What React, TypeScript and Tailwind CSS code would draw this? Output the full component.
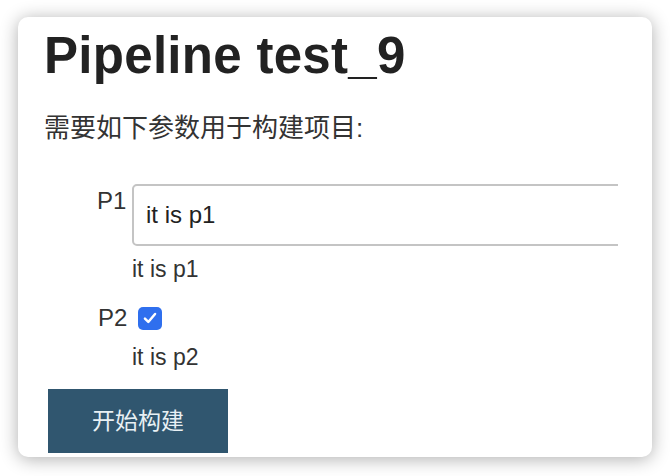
import React from "react";

export default function App() {
  const font = { fontFamily: '"Liberation Sans", Arial, "Noto Sans CJK SC", sans-serif' };
  return (
    <div className="w-[670px] h-[476px] bg-white pt-[17px] pl-[18px]" style={font}>
      <div className="w-[634px] h-[440px] bg-white rounded-[10px] overflow-hidden shadow-[0_2px_18px_rgba(0,0,0,0.32)] pl-[26px] pt-[10px]">
        <h1 className="text-[51px] leading-[58px] font-bold text-[#222] tracking-[0.3px]">Pipeline test_9</h1>
        <p className="mt-[29px] text-[26px] leading-[28px] text-[#333]">需要如下参数用于构建项目:</p>

        <div className="mt-[42px] w-[574px] overflow-hidden">
          <div className="flex items-start">
            <span className="shrink-0 ml-[53px] mt-[3px] w-[35px] text-[24px] leading-[28px] text-[#333]">P1</span>
            <div className="shrink-0 w-[520px] h-[62px] border-2 border-[#c4c4c4] rounded-[5px] flex items-center pl-[12px] text-[24px] text-[#222]">
              it is p1
            </div>
          </div>
          <div className="mt-[9px] pl-[88px] text-[23px] leading-[28px] text-[#333]">it is p1</div>

          <div className="mt-[23px] flex items-center h-[24px]">
            <span className="shrink-0 ml-[54px] w-[40px] text-[24px] leading-[28px] text-[#333]">P2</span>
            <div className="shrink-0 w-[24px] h-[23px] rounded-[5px] bg-[#2f6fee] flex items-center justify-center">
              <svg width="18" height="18" viewBox="0 0 16 16" fill="none">
                <path d="M3.5 8.5 L6.5 11.5 L12.5 4.5" stroke="white" strokeWidth="2.2" strokeLinecap="round" strokeLinejoin="round" />
              </svg>
            </div>
          </div>
          <div className="mt-[13px] pl-[88px] text-[23px] leading-[28px] text-[#333]">it is p2</div>
        </div>

        <button className="mt-[18px] ml-[4px] w-[180px] h-[64px] bg-[#30566f] text-[#e8f0f4] text-[23px] flex items-center justify-center">
          开始构建
        </button>
      </div>
    </div>
  );
}
